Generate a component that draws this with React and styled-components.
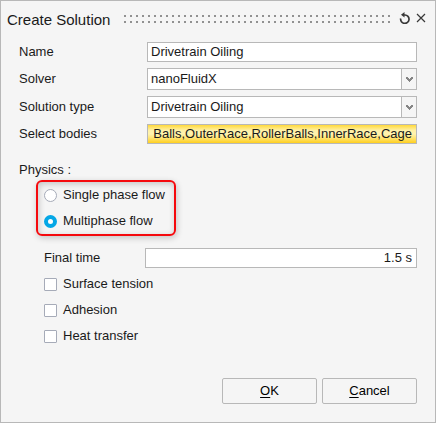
import React, { useState } from "react";
import styled, { createGlobalStyle, css } from "styled-components";

const GlobalStyle = createGlobalStyle`
  *, *::before, *::after { box-sizing: border-box; }
  body {
    margin: 0;
    background: #f5f5f5;
    color: #1a1a1a;
    font: 13px/20px "Liberation Sans", Arial, sans-serif;
  }
  input, select, button { font: inherit; color: inherit; margin: 0; }
`;

const Dialog = styled.form`
  display: flex;
  flex-direction: column;
  min-height: 100vh;
  padding: 8px 18px 18px;
  border: 1px solid #b8b8b8;
  background: #f5f5f5;
`;

const TitleBar = styled.header`
  display: flex;
  align-items: center;
  height: 20px;
  margin: 0 -10px 0 -12px;
`;

const Title = styled.h1`
  margin: 0 14px 0 0;
  padding-top: 2px;
  font-size: 15px;
  font-weight: 400;
`;

const Grip = styled.div`
  flex: 1;
  height: 8px;
  background-image:
    linear-gradient(90deg, transparent 2px, #f5f5f5 2px),
    linear-gradient(#919191 2px, transparent 2px);
  background-size: 6px 6px;
`;

const TitleActions = styled.div`
  display: flex;
  gap: 4px;
  margin-left: 8px;
`;

const IconButton = styled.button`
  display: flex;
  padding: 0 0 2px;
  border: 0;
  background: none;
`;

const Fields = styled.div`
  display: flex;
  flex-direction: column;
  gap: 6px;
  margin-top: 13px;
`;

const Row = styled.div`
  display: flex;
  align-items: center;
  padding-left: ${(p) => (p.$nested ? 25 : 0)}px;
`;

const Label = styled.label`
  flex: none;
  width: ${(p) => (p.$nested ? 101 : 128)}px;
`;

const fieldBox = css`
  flex: 1;
  min-width: 0;
  border: 1px solid #b8b8b8;
  background: #fff;
`;

const TextInput = styled.input`
  ${fieldBox}
  height: 20px;
  padding: 0 4px 0 3px;
  border-radius: 0;
  text-align: ${(p) => (p.$numeric ? "right" : "left")};
  outline: none;
`;

const Combo = styled.div`
  ${fieldBox}
  position: relative;
  display: flex;
  height: 22px;
`;

const Select = styled.select`
  appearance: none;
  flex: 1;
  min-width: 0;
  padding: 0 18px 0 3px;
  border: 0;
  background: none;
  outline: none;
`;

const ComboArrow = styled.span`
  position: absolute;
  inset: 0 0 0 auto;
  display: flex;
  align-items: center;
  justify-content: center;
  width: 15px;
  border-left: 1px solid #b8b8b8;
  background: #f5f5f5;
  pointer-events: none;
`;

const BodyPicker = styled.button`
  ${fieldBox}
  display: flex;
  align-items: center;
  justify-content: flex-end;
  height: 20px;
  padding: 0 4px 0 0;
  overflow: hidden;
  white-space: nowrap;
  background: linear-gradient(#ffd93b, #fff1a6 30%, #fff3b0 50%, #ffe26a 75%, #ffcf1f);
`;

const Physics = styled.fieldset`
  margin: 16px 0 0;
  padding: 0;
  border: 0;
`;

const Legend = styled.legend`
  padding: 0;
`;

const Highlight = styled.div`
  display: flex;
  flex-direction: column;
  gap: 6px;
  width: fit-content;
  margin-left: 17px;
  padding: 3px 9px 3px 6px;
  border: 2px solid #f5090d;
  border-radius: 6px;
  box-shadow: 1px 2px 6px rgba(0, 0, 0, 0.2), inset 1px 2px 6px rgba(0, 0, 0, 0.2);
`;

const Choice = styled.label`
  display: flex;
  align-items: center;
  gap: 6px;
  height: 20px;
`;

const Radio = styled.input`
  appearance: none;
  flex: none;
  width: 13px;
  height: 13px;
  border: 1px solid #a6abb8;
  border-radius: 50%;
  background: #fff;
  &:checked { border: 4px solid #05a7e6; }
`;

const Checkbox = styled.input`
  appearance: none;
  flex: none;
  width: 13px;
  height: 13px;
  border: 1px solid #a6abb8;
  border-radius: 1px;
  background: #fff;
  &:checked { background: #05a7e6; }
`;

const Options = styled.div`
  display: flex;
  flex-direction: column;
  gap: 6px;
  margin-top: 12px;
`;

const Checks = styled.div`
  display: flex;
  flex-direction: column;
  align-items: flex-start;
  gap: 6px;
  padding-left: 25px;
`;

const Footer = styled.footer`
  display: flex;
  justify-content: flex-end;
  gap: 5px;
  margin-top: auto;
`;

const PushButton = styled.button`
  width: 95px;
  height: 26px;
  padding: 0;
  border: 1px solid #b8b8b8;
  border-radius: 2px;
  background: #f5f5f5;
  color: #000;
`;

const Mnemonic = styled.span`
  text-decoration: underline;
  text-underline-offset: 2px;
`;

function ComboBox({ id, options }) {
  return (
    <Combo>
      <Select id={id} defaultValue={options[0]}>
        {options.map((o) => <option key={o}>{o}</option>)}
      </Select>
      <ComboArrow aria-hidden="true">
        <svg width="7" height="5" viewBox="0 0 7 5" fill="#858585">
          <path d="M0 0H2V1H3V2H4V1H5V0H7V2H6V3H5V4H4V5H3V4H2V3H1V2H0Z" />
        </svg>
      </ComboArrow>
    </Combo>
  );
}

export default function App() {
  const [flow, setFlow] = useState("Multiphase flow");
  return (
    <>
      <GlobalStyle />
      <Dialog onSubmit={(e) => e.preventDefault()}>
        <TitleBar>
          <Title>Create Solution</Title>
          <Grip />
          <TitleActions>
            <IconButton type="button" aria-label="Reset">
              <svg width="12" height="12" viewBox="0 0 12 12" fill="none" stroke="#383838">
                <path d="M1.7 6.5A4.2 4.2 0 1 0 6 3H4" strokeWidth="1.7" />
                <path d="M5.5 0V5.6L2 2.8Z" fill="#383838" stroke="none" />
              </svg>
            </IconButton>
            <IconButton type="button" aria-label="Close">
              <svg width="12" height="12" viewBox="0 0 12 12" fill="none" stroke="#383838" strokeWidth="1.2">
                <path d="M2 2L10 10M10 2L2 10" />
              </svg>
            </IconButton>
          </TitleActions>
        </TitleBar>

        <Fields>
          <Row>
            <Label htmlFor="name">Name</Label>
            <TextInput id="name" defaultValue="Drivetrain Oiling" />
          </Row>
          <Row>
            <Label htmlFor="solver">Solver</Label>
            <ComboBox id="solver" options={["nanoFluidX"]} />
          </Row>
          <Row>
            <Label htmlFor="type">Solution type</Label>
            <ComboBox id="type" options={["Drivetrain Oiling"]} />
          </Row>
          <Row>
            <Label htmlFor="bodies">Select bodies</Label>
            <BodyPicker id="bodies" type="button">
              Balls,OuterRace,RollerBalls,InnerRace,Cage
            </BodyPicker>
          </Row>
        </Fields>

        <Physics>
          <Legend>Physics :</Legend>
          <Highlight>
            {["Single phase flow", "Multiphase flow"].map((name) => (
              <Choice key={name}>
                <Radio type="radio" name="flow" checked={flow === name} onChange={() => setFlow(name)} />
                {name}
              </Choice>
            ))}
          </Highlight>
        </Physics>

        <Options>
          <Row $nested>
            <Label $nested htmlFor="time">Final time</Label>
            <TextInput id="time" $numeric defaultValue="1.5 s" />
          </Row>
          <Checks>
            {["Surface tension", "Adhesion", "Heat transfer"].map((name) => (
              <Choice key={name}>
                <Checkbox type="checkbox" />
                {name}
              </Choice>
            ))}
          </Checks>
        </Options>

        <Footer>
          <PushButton type="submit"><Mnemonic>O</Mnemonic>K</PushButton>
          <PushButton type="button"><Mnemonic>C</Mnemonic>ancel</PushButton>
        </Footer>
      </Dialog>
    </>
  );
}
